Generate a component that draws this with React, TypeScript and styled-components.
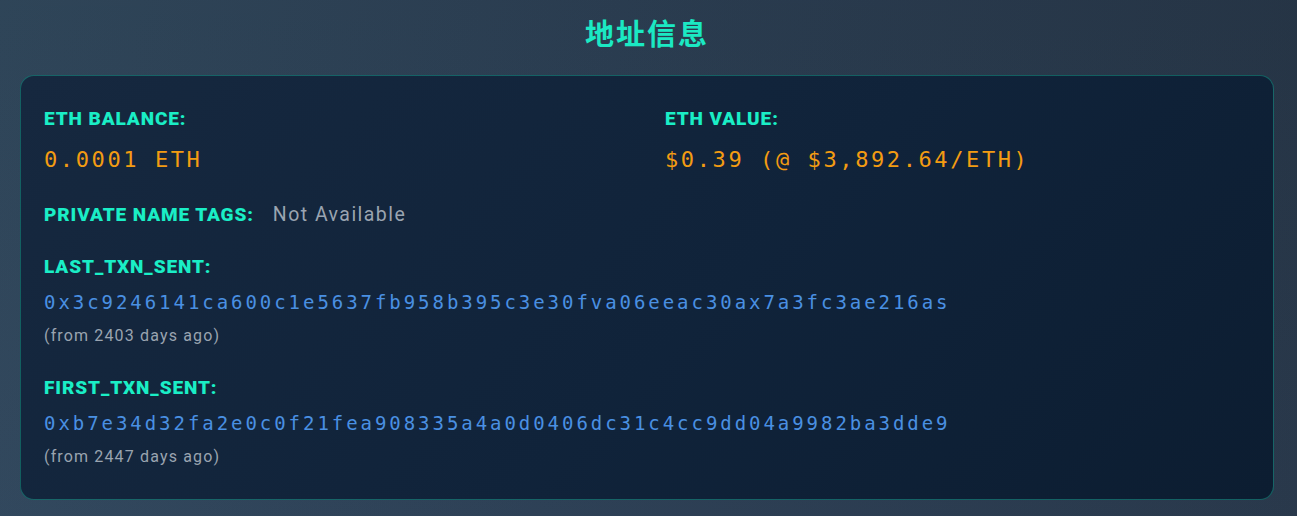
import React from "react";
import styled, { createGlobalStyle } from "styled-components";

const Global = createGlobalStyle`
  html, body { margin: 0; padding: 0; }
  body {
    width: 1297px;
    height: 516px;
    overflow: hidden;
    background: linear-gradient(100deg, #30475b 0%, #2b3e52 45%, #263546 100%);
    font-family: Roboto, "Noto Sans", sans-serif;
  }
`;

const Page = styled.main`
  min-height: 516px;
  box-sizing: border-box;
  padding: 12px 23px 16px 20px;
  display: flex;
  flex-direction: column;
  background: linear-gradient(180deg, rgba(0, 0, 0, 0.03) 0%, rgba(80, 100, 140, 0.08) 100%);
`;

const Title = styled.h1`
  margin: 0 0 23px;
  height: 40px;
  line-height: 40px;
  text-align: center;
  font-family: "Noto Sans CJK SC", "Noto Sans", sans-serif;
  font-weight: 700;
  font-size: 29px;
  letter-spacing: 2px;
  color: #1be9c3;
`;

const Card = styled.section`
  box-sizing: border-box;
  height: 425px;
  border: 1px solid rgba(30, 232, 194, 0.32);
  border-radius: 14px;
  padding: 31px 23px 30px;
  background: linear-gradient(135deg, #16283f 0%, #10233a 55%, #0c1d31 100%);
  display: flex;
  flex-direction: column;
  gap: 28px;
`;

const TopGrid = styled.div`
  display: grid;
  grid-template-columns: 1fr 1fr;
  column-gap: 36px;
`;

const Field = styled.div<{ $gap: number }>`
  display: flex;
  flex-direction: column;
  gap: ${(p) => p.$gap}px;
`;

const Label = styled.span`
  display: block;
  height: 24px;
  line-height: 24px;
  font-family: Roboto, "Noto Sans", sans-serif;
  font-weight: 900;
  font-size: 19px;
  letter-spacing: 0.9px;
  color: #1aeec6;
  white-space: nowrap;
`;

const Amount = styled.span`
  display: block;
  height: 30px;
  line-height: 30px;
  font-family: "DejaVu Sans Mono", "Liberation Mono", monospace;
  font-size: 22px;
  letter-spacing: 2.6px;
  color: #f39c12;
  white-space: nowrap;
`;

const InlineRow = styled.div`
  display: flex;
  align-items: center;
  gap: 19px;
  height: 24px;
`;

const Muted = styled.span`
  font-family: Roboto, "Noto Sans", sans-serif;
  font-size: 19.5px;
  letter-spacing: 1.45px;
  line-height: 24px;
  color: #9aa4b0;
`;

const Hash = styled.span`
  display: block;
  height: 28px;
  line-height: 28px;
  font-family: "DejaVu Sans Mono", "Liberation Mono", monospace;
  font-size: 19px;
  letter-spacing: 2.95px;
  color: #4a90e2;
  white-space: nowrap;
`;

const Ago = styled.span`
  display: block;
  height: 24px;
  line-height: 24px;
  font-family: Roboto, "Noto Sans", sans-serif;
  font-size: 16px;
  letter-spacing: 1.15px;
  color: #9aa4b0;
`;

const txns = [
  {
    label: "LAST_TXN_SENT:",
    hash: "0x3c9246141ca600c1e5637fb958b395c3e30fva06eeac30ax7a3fc3ae216as",
    ago: "(from 2403 days ago)",
  },
  {
    label: "FIRST_TXN_SENT:",
    hash: "0xb7e34d32fa2e0c0f21fea908335a4a0d0406dc31c4cc9dd04a9982ba3dde9",
    ago: "(from 2447 days ago)",
  },
];

export default function App() {
  return (
    <>
      <Global />
      <Page>
        <Title>地址信息</Title>
        <Card>
          <TopGrid>
            <Field $gap={14}>
              <Label>ETH BALANCE:</Label>
              <Amount>0.0001 ETH</Amount>
            </Field>
            <Field $gap={14}>
              <Label>ETH VALUE:</Label>
              <Amount>$0.39 (@ $3,892.64/ETH)</Amount>
            </Field>
          </TopGrid>
          <InlineRow>
            <Label>PRIVATE NAME TAGS:</Label>
            <Muted>Not Available</Muted>
          </InlineRow>
          {txns.map((t) => (
            <Field key={t.label} $gap={8.5}>
              <Label>{t.label}</Label>
              <Hash>{t.hash}</Hash>
              <Ago>{t.ago}</Ago>
            </Field>
          ))}
        </Card>
      </Page>
    </>
  );
}
